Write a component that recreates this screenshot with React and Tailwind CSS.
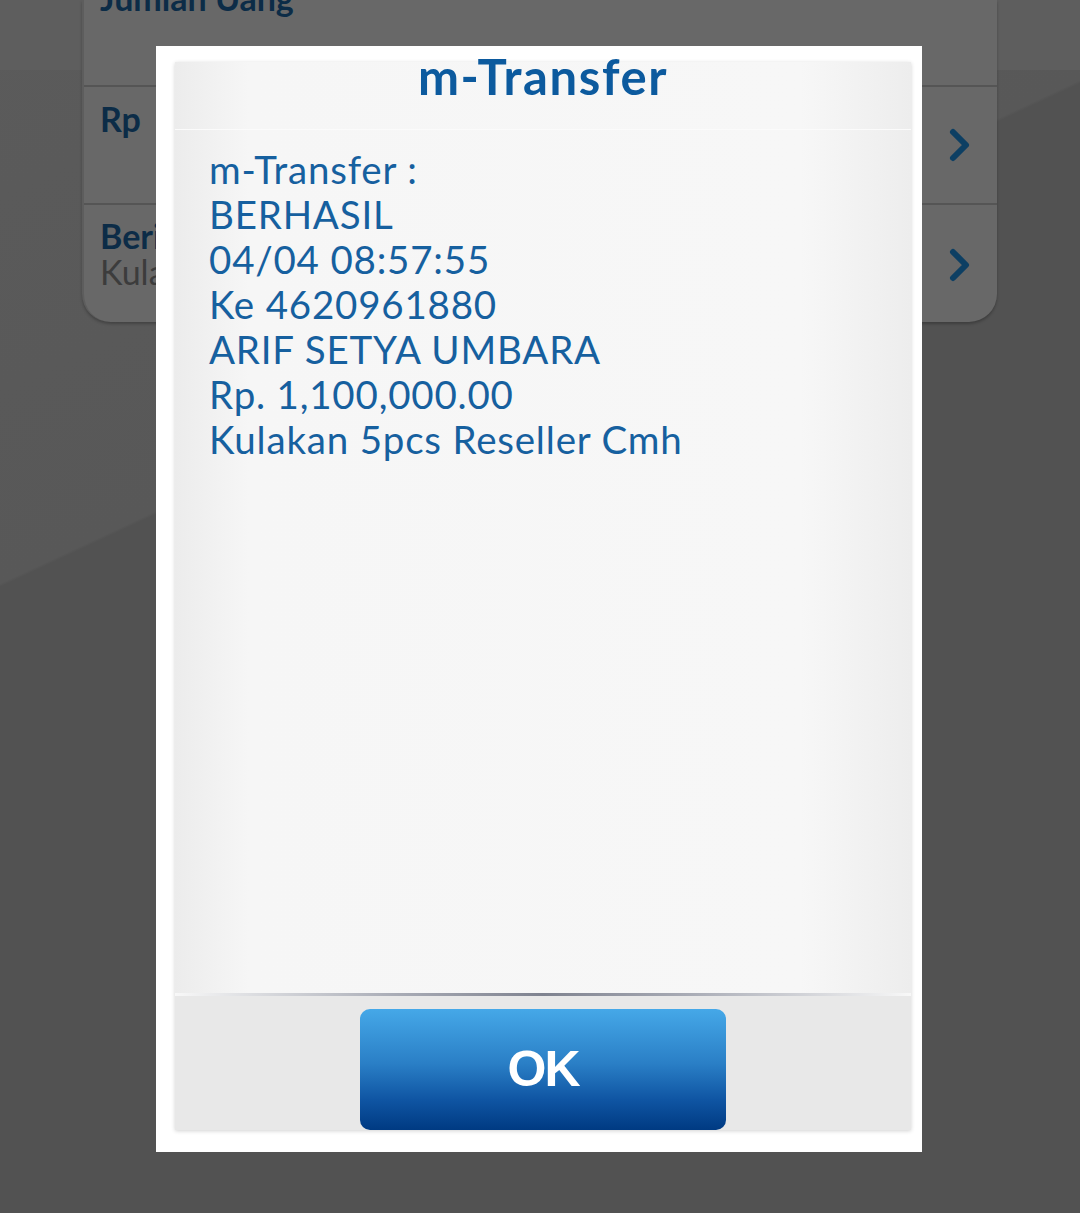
import React from 'react';

const lines = [
  'm-Transfer :',
  'BERHASIL',
  '04/04 08:57:55',
  'Ke 4620961880',
  'ARIF SETYA UMBARA',
  'Rp. 1,100,000.00',
  'Kulakan 5pcs Reseller Cmh',
];

const Chevron = () => (
  <svg width="26" height="36" viewBox="0 0 26 36" fill="none">
    <path d="M6 5 L19 18 L6 31" stroke="#0d3f63" strokeWidth="6" strokeLinecap="round" strokeLinejoin="round" />
  </svg>
);

const App = () => {
  return (
    <div
      className="relative w-[1080px] h-[1213px] overflow-hidden bg-[linear-gradient(155deg,#5b5b5b_0%,#585858_34%,#525252_34.2%,#525252_100%)]"
      style={{ fontFamily: 'Lato, "Noto Sans", sans-serif' }}
    >
      {/* background screen (dimmed) */}
      <div className="h-[70px] bg-[#5e5e5e]" />
      <div className="absolute top-0 left-[82px] w-[915px]">
        <div className="bg-[#686868] rounded-b-[28px] shadow-[0_2px_3px_rgba(0,0,0,0.25)] border-l-2 border-[#5d5d5d] overflow-hidden">
          <div className="h-[87px] border-b-2 border-[#555555] px-[16px] flex flex-col">
            <div className="text-[34px] font-bold text-[#0c2c47] leading-[40px] -mt-[22px]">Jumlah Uang</div>
          </div>
          <div className="h-[118px] border-b-2 border-[#555555] flex items-start justify-between px-[16px]">
            <div className="text-[34px] font-bold text-[#0c2c47] leading-[40px] pt-[12px]">Rp</div>
            <div className="pt-[40px] pr-[8px]"><Chevron /></div>
          </div>
          <div className="h-[117px] flex items-start justify-between px-[16px]">
            <div className="pt-[12px]">
              <div className="text-[34px] font-bold text-[#0c2c47] leading-[38px]">Berita</div>
              <div className="text-[34px] text-[#3c3c3c] leading-[34px]">Kulakan 5pcs Reseller Cmh</div>
            </div>
            <div className="pt-[42px] pr-[8px]"><Chevron /></div>
          </div>
        </div>
      </div>

      {/* dialog */}
      <div className="absolute left-[156px] top-[46px] w-[766px] h-[1106px] bg-white flex flex-col pl-[19px] pr-[11px] pt-[16px] pb-[22px]">
        <div className="flex-1 flex flex-col bg-[linear-gradient(90deg,#ececec_0%,#f6f6f6_10%,#f7f7f7_85%,#ededed_100%)] shadow-[0_1px_4px_rgba(0,0,0,0.18)]">
          <div className="h-[68px] border-b border-[#fbfbfb] flex justify-center">
            <div className="text-[49px] font-bold text-[#0c5a9e] leading-[30px] -mt-[1px] tracking-[1.6px]">m-Transfer</div>
          </div>
          <div className="flex-1 pl-[34px] pt-[17px]">
            {lines.map((l) => (
              <div key={l} className="text-[38.5px] leading-[45px] text-[#16609f] tracking-[0.8px]">{l}</div>
            ))}
          </div>
          <div className="h-[3px] bg-[linear-gradient(90deg,#f8f8f8_0%,#a9acb6_30%,#7e828f_50%,#a9acb6_70%,#f8f8f8_100%)]" />
          <div className="h-[134px] bg-[#e8e8e8] flex justify-center pt-[13px]">
            <button className="w-[366px] h-[121px] rounded-[10px] bg-[linear-gradient(180deg,#45a8e8_0%,#2a7fc6_45%,#0f55a3_75%,#003a82_100%)] flex items-center justify-center">
              <span className="text-white text-[50px] font-bold tracking-[-2px]" style={{ fontFamily: '"Liberation Sans", Arial, sans-serif' }}>OK</span>
            </button>
          </div>
        </div>
      </div>
    </div>
  );
};

export default App;
